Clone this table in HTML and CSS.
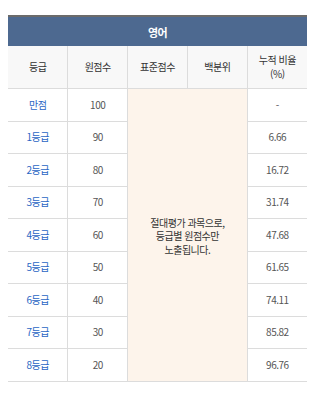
FILE: index.html
```html
<!DOCTYPE html>
<html lang="ko">
<head>
<meta charset="utf-8">
<link rel="stylesheet" href="styles.css">
</head>
<body>
<table class="grade-table">
  <colgroup><col><col><col><col><col></colgroup>
  <thead>
    <tr class="title-row"><th colspan="5">영어</th></tr>
    <tr class="head-row">
      <th>등급</th>
      <th>원점수</th>
      <th>표준점수</th>
      <th>백분위</th>
      <th>누적 비율<br>(%)</th>
    </tr>
  </thead>
  <tbody>
    <tr><td class="grade">만점</td><td>100</td><td class="note" colspan="2" rowspan="9">절대평가 과목으로,<br>등급별 원점수만<br>노출됩니다.</td><td>-</td></tr>
    <tr><td class="grade">1등급</td><td>90</td><td>6.66</td></tr>
    <tr><td class="grade">2등급</td><td>80</td><td>16.72</td></tr>
    <tr><td class="grade">3등급</td><td>70</td><td>31.74</td></tr>
    <tr><td class="grade">4등급</td><td>60</td><td>47.68</td></tr>
    <tr><td class="grade">5등급</td><td>50</td><td>61.65</td></tr>
    <tr><td class="grade">6등급</td><td>40</td><td>74.11</td></tr>
    <tr><td class="grade">7등급</td><td>30</td><td>85.82</td></tr>
    <tr><td class="grade">8등급</td><td>20</td><td>96.76</td></tr>
  </tbody>
</table>
</body>
</html>
```
FILE: styles.css
```css
html, body { background: #fff; }
body {
  margin: 15px 0 0 8px;
  font-family: "Noto Sans CJK KR", "Noto Sans", sans-serif;
  font-size: 10px;
  letter-spacing: -0.5px;
}
.grade-table {
  width: 299px;
  table-layout: fixed;
  border-collapse: collapse;
  border-top: 2px solid #6b6b6b;
}
.grade-table col { width: 20%; }
.grade-table th, .grade-table td {
  padding: 0;
  text-align: center;
  vertical-align: middle;
  line-height: 14px;
  border-left: 1px solid #dcdcdc;
  border-bottom: 1px solid #dcdcdc;
}
.grade-table tr > :first-child { border-left: none; }
.title-row th {
  height: 29px;
  background: #4d6990;
  color: #fff;
  font-weight: bold;
  font-size: 11px;
  border-bottom: none;
}
.head-row th {
  height: 42px;
  background: #f8f8f8;
  color: #333;
  font-weight: normal;
}
.grade-table tbody td {
  height: 31.5px;
  color: #555;
}
.grade-table tbody td.grade { color: #2a66c4; }
.grade-table tbody td.note {
  background: #fdf4eb;
  color: #333;
  line-height: 13.5px;
  padding-top: 2px;
}
```
